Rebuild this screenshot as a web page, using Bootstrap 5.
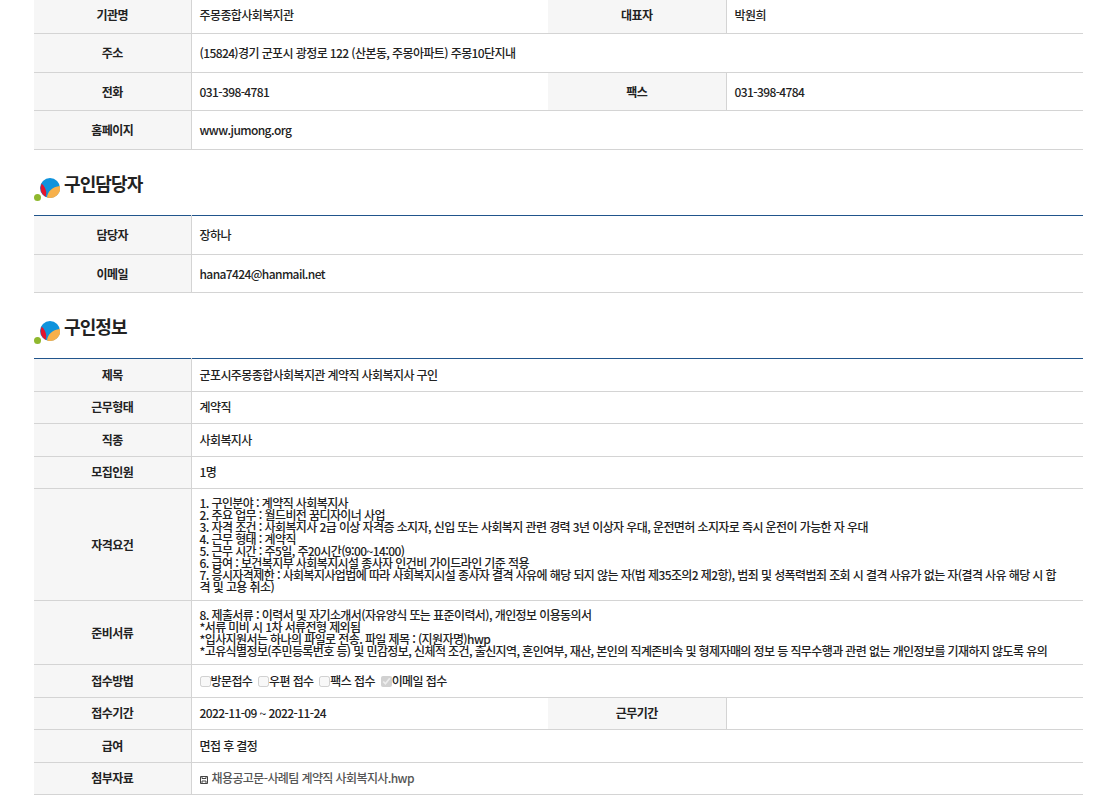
<!DOCTYPE html>
<html lang="ko">
<head>
<meta charset="utf-8">
<title>구인정보</title>
<link href="https://cdn.jsdelivr.net/npm/bootstrap@5.3.0/dist/css/bootstrap.min.css" rel="stylesheet">
<style>
body{font-family:"Noto Sans CJK KR","Noto Sans",sans-serif;font-size:12px;color:#222;background:#fff;overflow:hidden;letter-spacing:-.6px}
.page-wrap{padding:0 30px 0 34px}
.info-table{table-layout:fixed;width:100%;margin:0;border-collapse:collapse;--bs-table-color:#222;--bs-table-border-color:#d4d4d4}
.info-table>tbody>tr>*{padding:0 8px;border-bottom:1px solid #d4d4d4;vertical-align:middle;line-height:12px;font-size:12px;color:#222;box-shadow:none;word-break:break-all}
.info-table>tbody>tr>td{font-weight:500;padding-right:20px}
.info-table th{background:#f6f6f6;text-align:center;font-weight:700;border-right:1px solid #d4d4d4}
.col-head{width:157px}
.col-mid{width:178px}
.col-val{width:357px}
.contact tr:nth-child(1){height:33.5px}
.contact tr:nth-child(2){height:39px}
.contact tr:nth-child(3){height:38px}
.contact tr:nth-child(4){height:39px}
.info-table.contact>tbody>tr:nth-child(1)>*{padding-bottom:4px}
.person tr:nth-child(1){height:39px}
.person tr:nth-child(2){height:38px}
.job tr{height:32.5px}
.top-line{border-top:1px solid #21558c}
.sec-title{height:65px;padding-top:20px;gap:4px;font-size:18px;font-weight:700;line-height:26px;letter-spacing:-.9px;color:#222}
.sec-title svg{margin-top:7px}
.job tr.tall-a{height:112px}
.job tr.tall-b{height:64px}
.check-item{margin-right:3px}
.check-item input{width:11px;height:11px;margin:0;vertical-align:-1px}
.file-name{color:#555;margin-left:4px}
</style>
</head>
<body>
<main class="page-wrap">
<table class="table info-table contact">
<colgroup><col class="col-head"><col class="col-val"><col class="col-mid"><col></colgroup>
<tbody>
<tr><th>기관명</th><td>주몽종합사회복지관</td><th>대표자</th><td>박원희</td></tr>
<tr><th>주소</th><td colspan="3">(15824)경기 군포시 광정로 122 (산본동, 주몽아파트) 주몽10단지내</td></tr>
<tr><th>전화</th><td>031-398-4781</td><th>팩스</th><td>031-398-4784</td></tr>
<tr><th>홈페이지</th><td colspan="3">www.jumong.org</td></tr>
</tbody>
</table>

<h2 class="sec-title d-flex align-items-start m-0">
<svg width="26" height="26" viewBox="0 0 26 26" aria-hidden="true"><circle cx="3.500" cy="20.500" r="3.500" fill="#8fb82e"/><circle cx="16" cy="11" r="10" fill="#0f93dc"/><path d="M26 9A10 10 0 0 1 13 20.500C13.500 15 18 9.500 26 9Z" fill="#f7b04b"/><path d="M7.700 6.500A10 10 0 0 0 11.500 19.900C12.800 17 13 12 7.700 6.500Z" fill="#e3142d"/></svg>
<span>구인담당자</span></h2>
<table class="table info-table person top-line">
<colgroup><col class="col-head"><col></colgroup>
<tbody>
<tr><th>담당자</th><td>장하나</td></tr>
<tr><th>이메일</th><td>hana7424@hanmail.net</td></tr>
</tbody>
</table>

<h2 class="sec-title d-flex align-items-start m-0">
<svg width="26" height="26" viewBox="0 0 26 26" aria-hidden="true"><circle cx="3.500" cy="20.500" r="3.500" fill="#8fb82e"/><circle cx="16" cy="11" r="10" fill="#0f93dc"/><path d="M26 9A10 10 0 0 1 13 20.500C13.500 15 18 9.500 26 9Z" fill="#f7b04b"/><path d="M7.700 6.500A10 10 0 0 0 11.500 19.900C12.800 17 13 12 7.700 6.500Z" fill="#e3142d"/></svg>
<span>구인정보</span></h2>
<table class="table info-table job top-line">
<colgroup><col class="col-head"><col class="col-val"><col class="col-mid"><col></colgroup>
<tbody>
<tr><th>제목</th><td colspan="3">군포시주몽종합사회복지관 계약직 사회복지사 구인</td></tr>
<tr><th>근무형태</th><td colspan="3">계약직</td></tr>
<tr><th>직종</th><td colspan="3">사회복지사</td></tr>
<tr><th>모집인원</th><td colspan="3">1명</td></tr>
<tr class="tall-a"><th>자격요건</th><td colspan="3">1. 구인분야 : 계약직 사회복지사<br>2. 주요 업무 : 월드비전 꿈디자이너 사업<br>3. 자격 조건 : 사회복지사 2급 이상 자격증 소지자, 신입 또는 사회복지 관련 경력 3년 이상자 우대, 운전면허 소지자로 즉시 운전이 가능한 자 우대<br>4. 근무 형태 : 계약직<br>5. 근무 시간 : 주5일, 주20시간(9:00~14:00)<br>6. 급여 : 보건복지부 사회복지시설 종사자 인건비 가이드라인 기준 적용<br>7. 응시자격제한 : 사회복지사업법에 따라 사회복지시설 종사자 결격 사유에 해당 되지 않는 자(법 제35조의2 제2항), 범죄 및 성폭력범죄 조회 시 결격 사유가 없는 자(결격 사유 해당 시 합격 및 고용 취소)</td></tr>
<tr class="tall-b"><th>준비서류</th><td colspan="3">8. 제출서류 : 이력서 및 자기소개서(자유양식 또는 표준이력서), 개인정보 이용동의서<br>*서류 미비 시 1차 서류전형 제외됨<br>*입사지원서는 하나의 파일로 전송. 파일 제목 : (지원자명)hwp<br>*고유식별정보(주민등록번호 등) 및 민감정보, 신체적 조건, 출신지역, 혼인여부, 재산, 본인의 직계존비속 및 형제자매의 정보 등 직무수행과 관련 없는 개인정보를 기재하지 않도록 유의</td></tr>
<tr><th>접수방법</th><td colspan="3"><span class="check-item"><input type="checkbox" disabled aria-label="방문접수">방문접수</span> <span class="check-item"><input type="checkbox" disabled aria-label="우편 접수">우편 접수</span> <span class="check-item"><input type="checkbox" disabled aria-label="팩스 접수">팩스 접수</span> <span class="check-item"><input type="checkbox" disabled checked aria-label="이메일 접수">이메일 접수</span></td></tr>
<tr><th>접수기간</th><td>2022-11-09 ~ 2022-11-24</td><th>근무기간</th><td></td></tr>
<tr><th>급여</th><td colspan="3">면접 후 결정</td></tr>
<tr><th>첨부자료</th><td colspan="3"><svg width="8" height="8" viewBox="0 0 8 8" aria-hidden="true"><path d="M.5.500h7v7h-7zM2 .500v2h4v-2M2 7.500V5h4v2.500" fill="none" stroke="#444"/></svg><span class="file-name">채용공고문-사례팀 계약직 사회복지사.hwp</span></td></tr>
</tbody>
</table>
</main>
</body>
</html>
